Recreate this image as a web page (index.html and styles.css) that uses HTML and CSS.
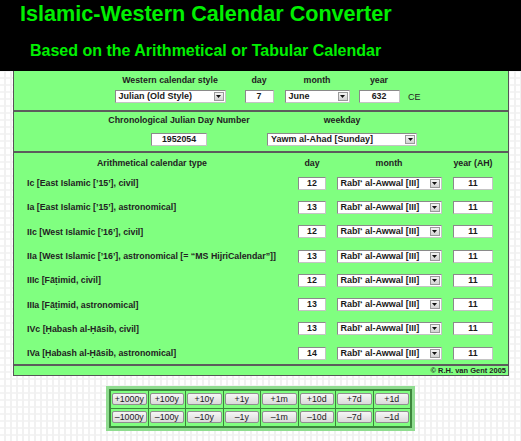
FILE: index.html
```html
<!DOCTYPE html>
<html lang="en">
<head>
<meta charset="utf-8">
<title>Islamic-Western Calendar Converter</title>
<link rel="stylesheet" href="styles.css">
</head>
<body>
<header class="masthead">
  <h1 class="title">Islamic-Western Calendar Converter</h1>
  <h2 class="subtitle">Based on the Arithmetical or Tabular Calendar</h2>
</header>

<main class="panel">
  <section class="sec sec-western">
    <div class="hd">Western calendar style</div>
    <div class="hd">day</div>
    <div class="hd">month</div>
    <div class="hd">year</div>
    <div class="hd"></div>
    <div class="sel w111"><span class="sel-text">Julian (Old Style)</span><span class="sel-btn"><svg width="5" height="3" viewBox="0 0 5 3"><path d="M0 0h5L2.5 3z" fill="#111"/></svg></span></div>
    <div class="inp w29">7</div>
    <div class="sel w65"><span class="sel-text">June</span><span class="sel-btn"><svg width="5" height="3" viewBox="0 0 5 3"><path d="M0 0h5L2.5 3z" fill="#111"/></svg></span></div>
    <div class="inp w41">632</div>
    <div class="unit">CE</div>
  </section>

  <section class="sec sec-jdn">
    <div class="hd">Chronological Julian Day Number</div>
    <div class="hd">weekday</div>
    <div class="inp w56">1952054</div>
    <div class="sel w150"><span class="sel-text">Yawm al-Ahad [Sunday]</span><span class="sel-btn"><svg width="5" height="3" viewBox="0 0 5 3"><path d="M0 0h5L2.5 3z" fill="#111"/></svg></span></div>
  </section>

  <section class="sec sec-arith">
    <div class="arow arow-head">
      <div class="hd">Arithmetical calendar type</div>
      <div class="hd">day</div>
      <div class="hd">month</div>
      <div class="hd">year (AH)</div>
    </div>
    <div class="arows">
      <div class="arow">
        <div class="lbl">Ic [East Islamic [’15’], civil]</div>
        <div class="inp w28">12</div>
        <div class="sel w105"><span class="sel-text">Rabī‘ al-Awwal [III]</span><span class="sel-btn"><svg width="5" height="3" viewBox="0 0 5 3"><path d="M0 0h5L2.5 3z" fill="#111"/></svg></span></div>
        <div class="inp w40">11</div>
      </div>
      <div class="arow">
        <div class="lbl">Ia [East Islamic [’15’], astronomical]</div>
        <div class="inp w28">13</div>
        <div class="sel w105"><span class="sel-text">Rabī‘ al-Awwal [III]</span><span class="sel-btn"><svg width="5" height="3" viewBox="0 0 5 3"><path d="M0 0h5L2.5 3z" fill="#111"/></svg></span></div>
        <div class="inp w40">11</div>
      </div>
      <div class="arow">
        <div class="lbl">IIc [West Islamic [’16’], civil]</div>
        <div class="inp w28">12</div>
        <div class="sel w105"><span class="sel-text">Rabī‘ al-Awwal [III]</span><span class="sel-btn"><svg width="5" height="3" viewBox="0 0 5 3"><path d="M0 0h5L2.5 3z" fill="#111"/></svg></span></div>
        <div class="inp w40">11</div>
      </div>
      <div class="arow">
        <div class="lbl">IIa [West Islamic [’16’], astronomical [= “MS HijriCalendar”]]</div>
        <div class="inp w28">13</div>
        <div class="sel w105"><span class="sel-text">Rabī‘ al-Awwal [III]</span><span class="sel-btn"><svg width="5" height="3" viewBox="0 0 5 3"><path d="M0 0h5L2.5 3z" fill="#111"/></svg></span></div>
        <div class="inp w40">11</div>
      </div>
      <div class="arow">
        <div class="lbl">IIIc [Fāṭimid, civil]</div>
        <div class="inp w28">12</div>
        <div class="sel w105"><span class="sel-text">Rabī‘ al-Awwal [III]</span><span class="sel-btn"><svg width="5" height="3" viewBox="0 0 5 3"><path d="M0 0h5L2.5 3z" fill="#111"/></svg></span></div>
        <div class="inp w40">11</div>
      </div>
      <div class="arow">
        <div class="lbl">IIIa [Fāṭimid, astronomical]</div>
        <div class="inp w28">13</div>
        <div class="sel w105"><span class="sel-text">Rabī‘ al-Awwal [III]</span><span class="sel-btn"><svg width="5" height="3" viewBox="0 0 5 3"><path d="M0 0h5L2.5 3z" fill="#111"/></svg></span></div>
        <div class="inp w40">11</div>
      </div>
      <div class="arow">
        <div class="lbl">IVc [Ḥabash al-Ḥāsib, civil]</div>
        <div class="inp w28">13</div>
        <div class="sel w105"><span class="sel-text">Rabī‘ al-Awwal [III]</span><span class="sel-btn"><svg width="5" height="3" viewBox="0 0 5 3"><path d="M0 0h5L2.5 3z" fill="#111"/></svg></span></div>
        <div class="inp w40">11</div>
      </div>
      <div class="arow">
        <div class="lbl">IVa [Ḥabash al-Ḥāsib, astronomical]</div>
        <div class="inp w28">14</div>
        <div class="sel w105"><span class="sel-text">Rabī‘ al-Awwal [III]</span><span class="sel-btn"><svg width="5" height="3" viewBox="0 0 5 3"><path d="M0 0h5L2.5 3z" fill="#111"/></svg></span></div>
        <div class="inp w40">11</div>
      </div>
    </div>
  </section>

  <footer class="credit">© R.H. van Gent 2005</footer>
</main>

<div class="pad-wrap">
  <div class="pad">
    <div class="cell"><button class="step">+1000y</button></div>
    <div class="cell"><button class="step">+100y</button></div>
    <div class="cell"><button class="step">+10y</button></div>
    <div class="cell"><button class="step">+1y</button></div>
    <div class="cell"><button class="step">+1m</button></div>
    <div class="cell"><button class="step">+10d</button></div>
    <div class="cell"><button class="step">+7d</button></div>
    <div class="cell"><button class="step">+1d</button></div>
    <div class="cell"><button class="step">–1000y</button></div>
    <div class="cell"><button class="step">–100y</button></div>
    <div class="cell"><button class="step">–10y</button></div>
    <div class="cell"><button class="step">–1y</button></div>
    <div class="cell"><button class="step">–1m</button></div>
    <div class="cell"><button class="step">–10d</button></div>
    <div class="cell"><button class="step">–7d</button></div>
    <div class="cell"><button class="step">–1d</button></div>
  </div>
</div>
</body>
</html>
```

FILE: styles.css
```css
* { box-sizing: border-box; }

body {
  margin: 0;
  height: 441px;
  overflow: hidden;
  font-family: "Liberation Sans", Arial, sans-serif;
  color: #222;
  background-color: #fff;
  background-image:
    repeating-linear-gradient(90deg, transparent 0 4px, #f1f1f1 4px 6px),
    repeating-linear-gradient(0deg, transparent 0 5px, #f4f4f4 5px 7px);
}

/* ---------- header ---------- */
.masthead {
  background: #000;
  height: 71px;
  padding-top: 2px;
}
.title {
  margin: 0;
  padding-left: 20px;
  font-size: 21.6px;
  line-height: 24px;
  font-weight: bold;
  color: #00f000;
}
.subtitle {
  margin: 14.5px 0 0;
  padding-left: 30px;
  font-size: 16px;
  line-height: 20px;
  font-weight: bold;
  color: #00f000;
}

/* ---------- green panel ---------- */
.panel {
  width: 496px;
  margin-left: 13px;
  background: #80ff80;
  border-left: 1px solid #555;
  border-right: 1px solid #555;
  border-bottom: 1px solid #555;
  font-size: 8.8px;
  font-weight: bold;
}
.sec {
  border-bottom: 2px solid #5c5c5c;
}
.hd {
  line-height: 14px;
  height: 14px;
  white-space: nowrap;
}

.sec-western {
  height: 41px;
  padding: 1.5px 0 0 92px;
  display: grid;
  grid-template-columns: 128px 50px 66px 58px auto;
  grid-template-rows: 14px 13px;
  row-gap: 3.5px;
  justify-items: center;
  align-items: center;
}
.unit {
  justify-self: start;
  font-weight: normal;
  font-size: 9px;
  padding-left: 0;
}

.sec-jdn {
  height: 41px;
  padding: 0.5px 0 0 86px;
  display: grid;
  grid-template-columns: 158px 168px;
  grid-template-rows: 14px 13px;
  row-gap: 6.5px;
  justify-items: center;
  align-items: center;
}

.sec-arith {
  padding: 3px 0 4.25px 0;
}
.arow {
  display: grid;
  grid-template-columns: 276px 44px 110px 58px;
  justify-items: center;
  align-items: center;
  height: 13px;
}
.arow-head {
  height: 14px;
}
.arows {
  padding-top: 6.65px;
  display: flex;
  flex-direction: column;
  gap: 11.3px;
}
.lbl {
  justify-self: start;
  padding-left: 13px;
  white-space: nowrap;
}

/* ---------- fake form controls ---------- */
.inp,
.sel {
  height: 13px;
  background: #fff;
  border: 1px solid #8a8a8a;
  border-right-color: #c4c4c4;
  border-bottom-color: #c4c4c4;
  font-size: 8.8px;
  font-weight: bold;
  line-height: 11px;
  color: #1a1a1a;
}
.inp { text-align: center; }
.sel {
  display: flex;
  align-items: center;
}
.sel-text {
  flex: 1;
  padding-left: 3px;
  font-size: 9px;
  white-space: nowrap;
  overflow: hidden;
}
.sel-btn {
  width: 10px;
  height: 9px;
  margin-right: 1px;
  background: linear-gradient(#f4f4f4, #d2d2d2);
  border: 1px solid #9a9a9a;
  display: flex;
  align-items: center;
  justify-content: center;
}
.sel-btn svg { display: block; }

.w28 { width: 28px; }
.w29 { width: 29px; }
.w40 { width: 40px; }
.w41 { width: 41px; }
.w56 { width: 56px; }
.w65 { width: 65px; }
.w105 { width: 105px; }
.w111 { width: 111px; }
.w150 { width: 150px; }

.credit {
  height: 9px;
  line-height: 9px;
  font-size: 7.5px;
  text-align: right;
  padding-right: 2px;
}

/* ---------- stepper pad ---------- */
.pad-wrap {
  margin-top: 10px;
  display: flex;
  justify-content: center;
}
.pad {
  display: grid;
  grid-template-columns: repeat(8, auto);
  gap: 1px;
  padding: 2px;
  background: #3c873c;
  border: 3px solid #8fdc8f;
}
.cell {
  background: #80ff80;
  padding: 2.5px 1px;
}
.step {
  display: block;
  width: 34.5px;
  height: 12px;
  padding: 0;
  font-family: "Liberation Sans", Arial, sans-serif;
  font-size: 8.8px;
  line-height: 10px;
  color: #222;
  background: linear-gradient(#f6f6f6, #dadada);
  border: 1px solid #8e8e8e;
  border-radius: 2px;
}
```
